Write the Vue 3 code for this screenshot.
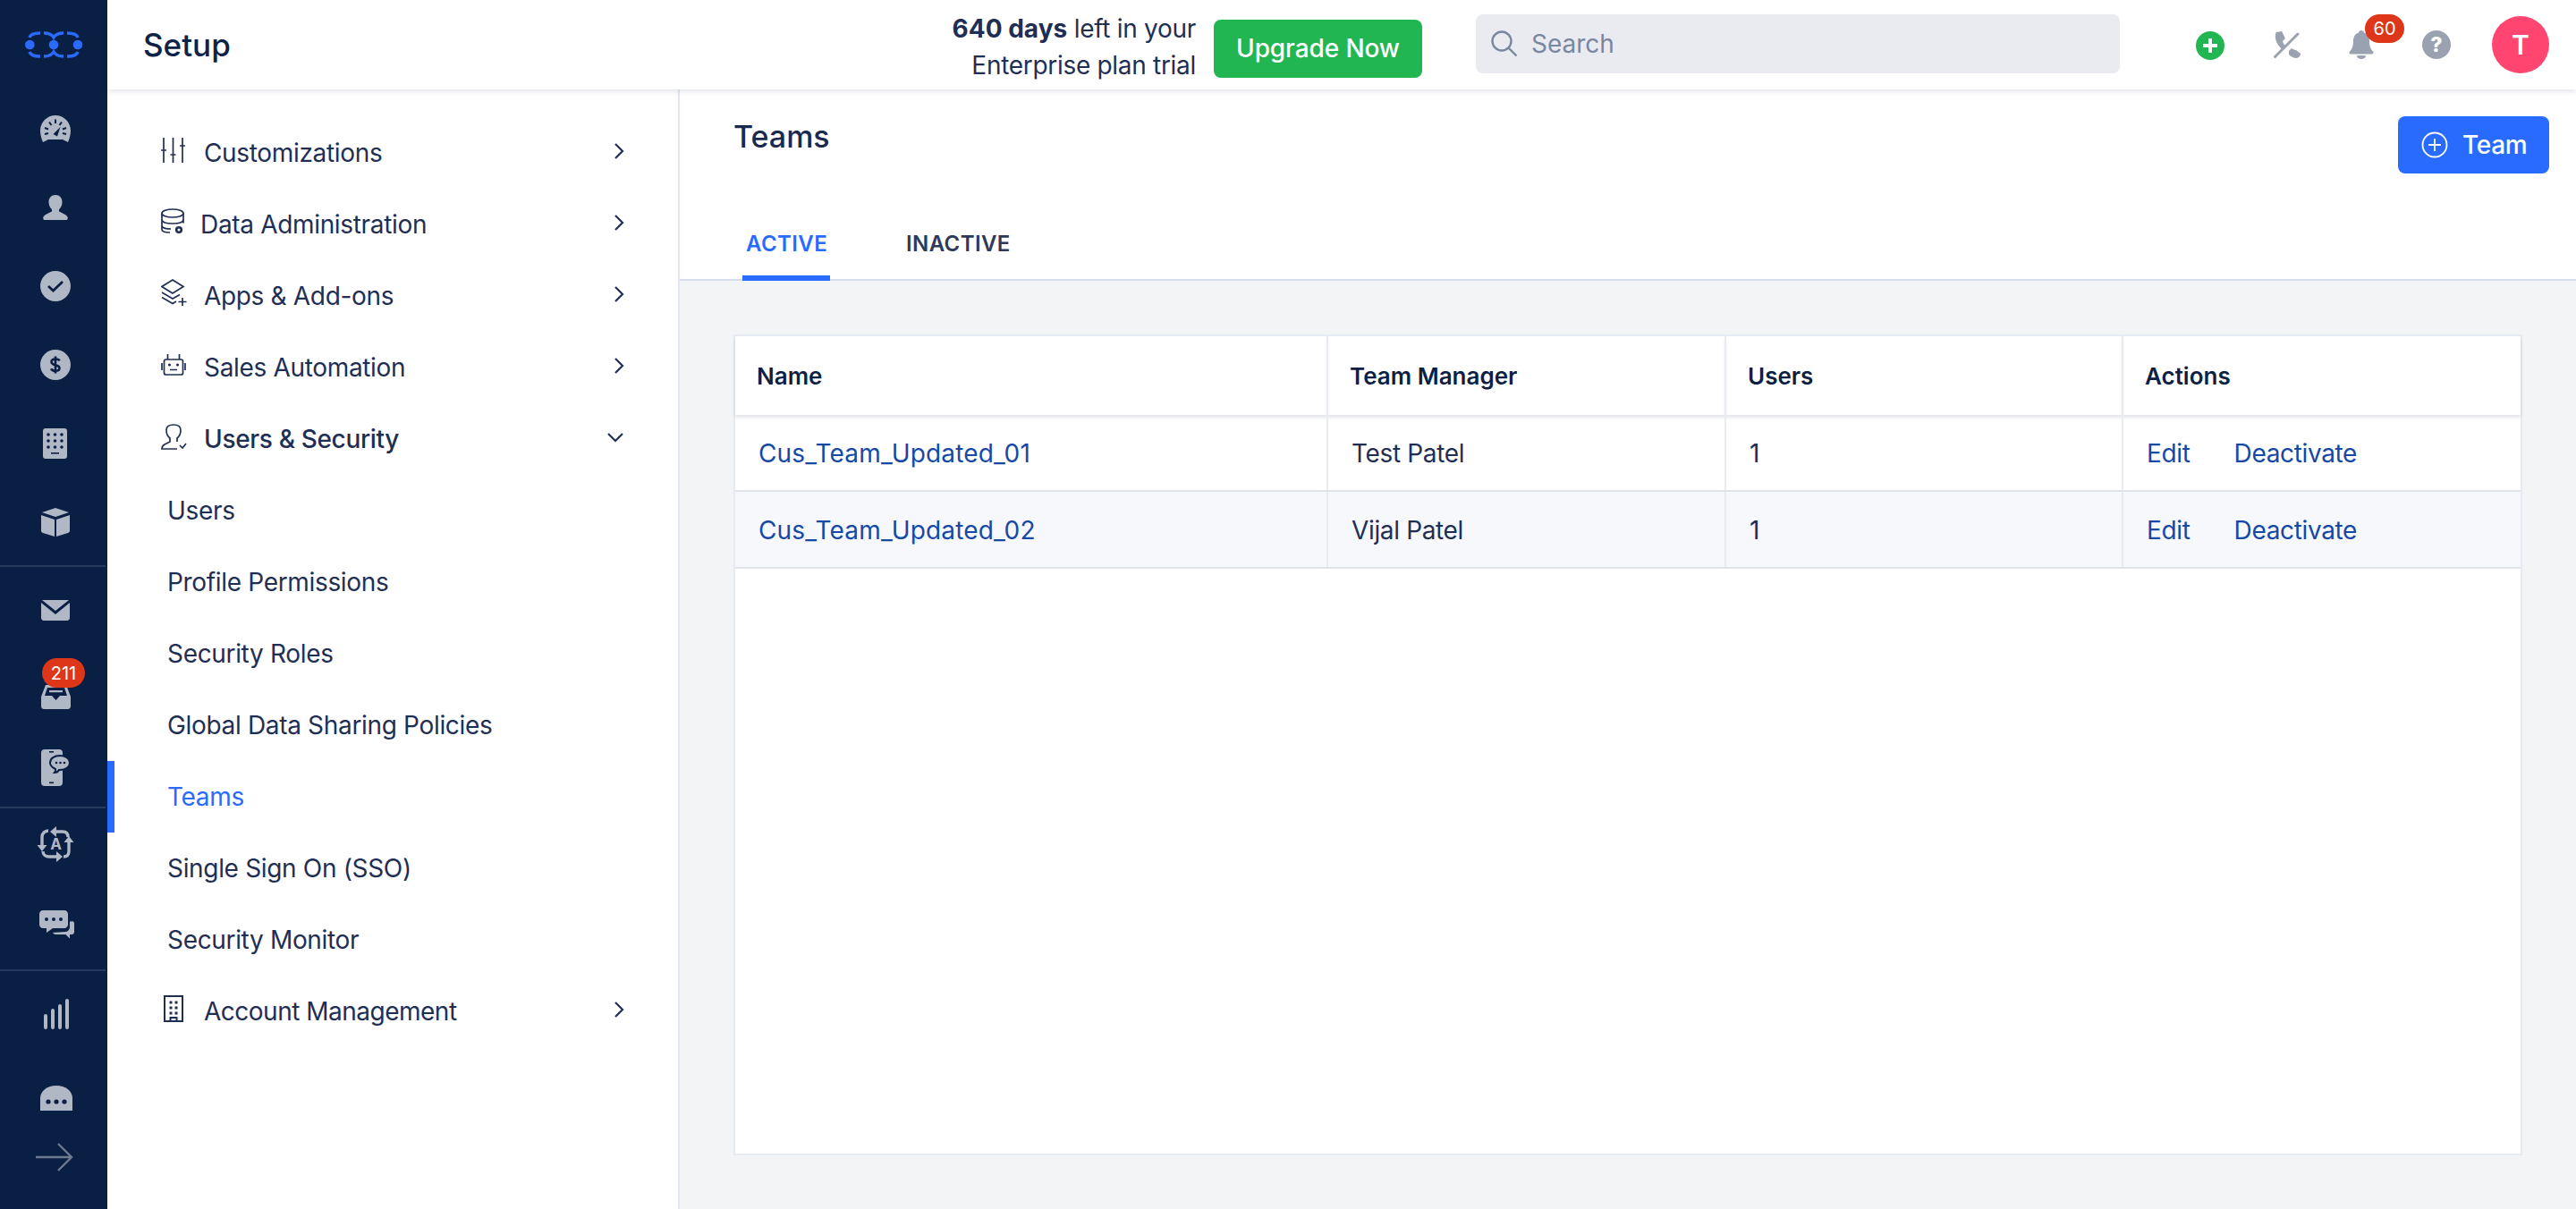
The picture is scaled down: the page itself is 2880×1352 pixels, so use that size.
<script setup>
const menuTop = [
  { label: 'Customizations', icon: 'sliders' },
  { label: 'Data Administration', icon: 'db', tight: true },
  { label: 'Apps & Add-ons', icon: 'layers' },
  { label: 'Sales Automation', icon: 'bot' },
]
const subs = ['Users', 'Profile Permissions', 'Security Roles', 'Global Data Sharing Policies', 'Teams', 'Single Sign On (SSO)', 'Security Monitor']
const rows = [
  { name: 'Cus_Team_Updated_01', manager: 'Test Patel', users: 1 },
  { name: 'Cus_Team_Updated_02', manager: 'Vijal Patel', users: 1 },
]
</script>

<template>
  <div class="app">
    <aside class="rail">
      <div class="logo-slot">
        <svg width="64" height="32" viewBox="0 0 64 32" fill="none" stroke="#2a6bff" stroke-width="3.400">
          <circle cx="5.300" cy="16" r="5.300" fill="#2a6bff" stroke="none"/>
          <circle cx="32" cy="16" r="5.300" fill="#2a6bff" stroke="none"/>
          <circle cx="59" cy="16" r="5.300" fill="#2a6bff" stroke="none"/>
          <path d="M5 8C6 4 10 3 17 3M21 3c6 0 9 1.500 11 5 2-3.500 5-5 11-5M47 3c7 0 11 1 12 5M5 24c1 4 5 5 12 5M21 29c6 0 9-1.500 11-5 2 3.500 5 5 11 5M47 29c7 0 11-1 12-5"/>
        </svg>
      </div>
      <div class="slot">
        <svg width="34" height="30" viewBox="0 0 34 30"><path fill="#b0b7c5" d="M17 0C7.600 0 0 7.600 0 17c0 4.200 1.100 8.500 3 13l6-3h16l6 3c1.900-4.500 3-8.800 3-13C34 7.600 26.400 0 17 0z"/><path d="M14.500 21l8-8-3.500 10.500z" fill="#0a1f44"/><path d="M5 21l4-1M5 14l4 1.500M10 7.500l2.500 3.500M17 4.500v4.500M24 7.500L21.500 11M29 14l-4 1.500M29 21l-4-1" stroke="#0a1f44" stroke-width="2"/></svg>
      </div>
      <div class="slot">
        <svg width="28" height="28" viewBox="0 0 28 28"><path fill="#b0b7c5" d="M14 0c4.600 0 7.500 3.400 7.500 8 0 3.500-1.600 6.600-3.500 8.300v2.200c3 1.500 8.400 3.500 9.600 6.200.5 1.300 0 3.300-1.600 3.300H2c-1.600 0-2.100-2-1.600-3.300C1.600 22 7 20 10 18.500v-2.200C8.100 14.600 6.500 11.500 6.500 8 6.500 3.400 9.400 0 14 0z"/></svg>
      </div>
      <div class="slot">
        <svg width="34" height="34" viewBox="0 0 34 34"><circle cx="17" cy="17" r="17" fill="#b0b7c5"/><path d="M9 17l5.500 5L25 12" fill="none" stroke="#0a1f44" stroke-width="2.800"/></svg>
      </div>
      <div class="slot">
        <svg width="34" height="34" viewBox="0 0 34 34"><circle cx="17" cy="17" r="17" fill="#b0b7c5"/><path d="M21.500 12.500C21 11 19 10.500 17 10.500c-2.500 0-4.500 1-4.500 3.200 0 4.500 9 2.500 9 6.800 0 2.200-2 3.300-4.500 3.300-2.200 0-4.200-.8-4.800-2.500M17 7.500v19" fill="none" stroke="#0a1f44" stroke-width="2.600"/></svg>
      </div>
      <div class="slot">
        <svg width="28" height="34" viewBox="0 0 28 34"><rect width="27" height="34" rx="3" fill="#b0b7c5"/><g fill="#0a1f44"><circle cx="6" cy="7" r="1.800"/><circle cx="13.500" cy="7" r="1.800"/><circle cx="21" cy="7" r="1.800"/><circle cx="6" cy="14" r="1.800"/><circle cx="13.500" cy="14" r="1.800"/><circle cx="21" cy="14" r="1.800"/><circle cx="6" cy="21" r="1.800"/><circle cx="13.500" cy="21" r="1.800"/><circle cx="21" cy="21" r="1.800"/><rect x="9" y="27" width="9" height="1.600"/></g></svg>
      </div>
      <div class="slot">
        <svg width="32" height="32" viewBox="0 0 32 32"><path fill="#b0b7c5" d="M16 0l15 5-15 5L1 5zM0 8l15 5v19L2 28c-1.200-.4-2-1.200-2-2.500zM32 8l-15 5v19l13-4c1.200-.4 2-1.200 2-2.500z"/></svg>
      </div>
      <div class="rule"></div>
      <div class="slot">
        <svg width="32" height="24" viewBox="0 0 32 24"><path fill="#b0b7c5" d="M1 1h30L16 13zM0 4l16 13L32 4v17c0 1.600-1.400 3-3 3H3c-1.600 0-3-1.400-3-3z"/></svg>
      </div>
      <div class="slot slot-inbox">
        <span class="rail-badge">211</span>
        <svg width="33" height="27" viewBox="0 0 33 27"><path fill="#b0b7c5" d="M5 0h23l5 13v11c0 1.600-1.400 3-3 3H3c-1.600 0-3-1.400-3-3V13z"/><path fill="#0a1f44" d="M7 3h19l3 9h-8l-4.500 5-4.500-5H4z"/><path fill="#b0b7c5" d="M9 6h15v2.200H9z"/></svg>
      </div>
      <div class="slot">
        <svg width="32" height="41" viewBox="0 0 32 41"><rect x="0" y="0" width="24" height="41" rx="4" fill="#b0b7c5"/><path fill="#b0b7c5" stroke="#0a1f44" stroke-width="2" d="M21 7c6 0 11 3 11 8s-5 8-11 8h-1c-1 2-3 3-5 3 1-1 1.500-2.500 1-4-3-1.500-6-3.500-6-7 0-5 5-8 11-8z"/><circle cx="17" cy="15" r="1.300" fill="#0a1f44"/><circle cx="21.500" cy="15" r="1.300" fill="#0a1f44"/><circle cx="26" cy="15" r="1.300" fill="#0a1f44"/><rect x="9" y="2" width="5" height="1.600" fill="#0a1f44"/><rect x="9" y="36.500" width="5" height="1.600" fill="#0a1f44"/></svg>
      </div>
      <div class="rule rule-flush"></div>
      <div class="slot slot-translate">
        <svg width="42" height="40" viewBox="0 0 42 40" fill="none" stroke="#b0b7c5" stroke-width="3.400"><path d="M19 6h9c4 0 6 2 6 6M35 17v11c0 4-2 6-6 6M22 34h-9c-4 0-7-2-7-6M5 22V12c0-4 3-7 7-7"/><path fill="#b0b7c5" stroke="none" d="M21 0v12l-7-6zM21 28v12l7-6zM-0.500 21h11l-5.500 7zM29.500 18h11L35 11z"/><text x="20.500" y="26" font-family="Inter" font-size="17" font-weight="700" fill="#b0b7c5" stroke="none" text-anchor="middle">A</text></svg>
      </div>
      <div class="slot slot-chat">
        <svg width="40" height="34" viewBox="0 0 40 34"><path fill="#b0b7c5" d="M4 0h24c2.200 0 4 1.800 4 4v12c0 2.200-1.800 4-4 4H15l-7 5v-5H4c-2.200 0-4-1.800-4-4V4c0-2.200 1.800-4 4-4z"/><circle cx="8" cy="10" r="2" fill="#0a1f44"/><circle cx="16" cy="10" r="2" fill="#0a1f44"/><circle cx="24" cy="10" r="2" fill="#0a1f44"/><path fill="#b0b7c5" stroke="#0a1f44" stroke-width="2" d="M36 11c2.200 0 4 1.800 4 4v9c0 2.200-1.800 4-4 4h-1v6l-6-6H19c-3 0-5-2-5-4l15-1c2 0 4-2 4-4v-7z"/></svg>
      </div>
      <div class="rule rule-third"></div>
      <div class="slot slot-bars">
        <svg width="28" height="34" viewBox="0 0 28 34"><g fill="#b0b7c5"><rect x="0" y="17" width="4" height="17" rx="2"/><rect x="8" y="11" width="4" height="23" rx="2"/><rect x="16" y="6" width="4" height="28" rx="2"/><rect x="24" y="0" width="4" height="34" rx="2"/></g></svg>
      </div>
      <div class="slot slot-clip">
        <svg width="36" height="28" viewBox="0 0 36 28"><path fill="#b0b7c5" d="M18 0c10 0 18 6 18 14v14H0V14C0 6 8 0 18 0z"/><circle cx="9" cy="18" r="2.600" fill="#0a1f44"/><circle cx="18" cy="18" r="2.600" fill="#0a1f44"/><circle cx="27" cy="18" r="2.600" fill="#0a1f44"/></svg>
      </div>
      <div class="arrow-slot">
        <svg width="42" height="32" viewBox="0 0 42 32" fill="none" stroke="#6d7a90" stroke-width="2.400"><path d="M0 16h40M25 1l15 15-15 15"/></svg>
      </div>
    </aside>

    <div class="main">
      <header class="topbar">
        <div class="title">Setup</div>
        <div class="trial"><b>640 days</b> left in your<br>Enterprise plan trial</div>
        <button class="upgrade">Upgrade Now</button>
        <div class="search">
          <svg width="30" height="30" viewBox="0 0 30 30" fill="none" stroke="#7a879e" stroke-width="2.400"><circle cx="12" cy="12" r="10.500"/><path d="M19.500 19.500L28.500 28.500"/></svg>
          <span>Search</span>
        </div>
        <div class="tools">
          <svg class="t-plus" width="32" height="32" viewBox="0 0 32 32"><circle cx="16" cy="16" r="16" fill="#22b653"/><path d="M16 8v16M8 16h16" stroke="#fff" stroke-width="4"/></svg>
          <svg class="t-phone" width="30" height="30" viewBox="0 0 30 30"><path fill="#9aa1b0" d="M3 1l6-1 4 8-3 3c.6 2.500 1.500 4 3 5l-4 4C4 15 1 9 2 3zM17 22l3-3c2 1 3.500 2 5 2l5 4c0 3-2 4-4 5-4 0-7-2-9-4z"/><path d="M1.500 28.500L27 3" stroke="#9aa1b0" stroke-width="3" stroke-linecap="round"/></svg>
          <span class="t-bell">
            <svg width="28" height="32" viewBox="0 0 28 32"><path fill="#9aa1b0" d="M14 0c2 0 3 1.500 3 2.500C21.500 4 23 8 23 12c0 6 1.500 9 4 11.500.9 1 .5 3-1.200 3H2.200C.5 26.500.1 24.500 1 23.500 3.500 21 5 18 5 12c0-4 1.500-8 6-9.500C11 1.500 12 0 14 0zM9 28h10c0 2.500-2.200 4-5 4s-5-1.500-5-4z"/></svg>
            <span class="bell-badge">60</span>
          </span>
          <svg class="t-help" width="32" height="32" viewBox="0 0 32 32"><circle cx="16" cy="16" r="16" fill="#9aa1b0"/><text x="16" y="24" text-anchor="middle" font-family="Inter" font-weight="800" font-size="23" fill="#fff">?</text></svg>
          <div class="avatar">T</div>
        </div>
      </header>

      <div class="body">
        <nav class="menu">
          <div v-for="item in menuTop" :key="item.label" class="m-row">
            <svg class="m-icon" width="30" height="34" viewBox="0 0 30 34" fill="none" stroke="#1f2f54" stroke-width="1.700">
              <template v-if="item.icon === 'sliders'"><path d="M3 3v28M13.500 3v28M24 3v28M0 17h6M10.500 22h6M21 12h6"/></template>
              <template v-else-if="item.icon === 'db'"><ellipse cx="13" cy="7.500" rx="12" ry="4.500"/><path d="M1 7.500v18c0 2 3 3.500 9 3.500M25 7.500v11M1 14.500c0 3 5 4.500 12 4.500s12-1.500 12-4.500M1 21c0 2 3 4 10 4"/><circle cx="20" cy="26" r="2.800" stroke-width="2.600"/></template>
              <template v-else-if="item.icon === 'layers'"><path d="M13 2l12 7.500L13 17 1 9.500zM1 16l12 7 8-4.500M1 21.500l12 7 4-2.500M24 22v9M19.500 26.500h9"/></template>
              <template v-else><rect x="3.500" y="11" width="21" height="17" rx="2"/><path d="M7.500 5v6M20.500 5v6M1 15v8M27 15v8M10 22.500h8"/><circle cx="9.500" cy="17" r="1.600" fill="#1f2f54" stroke="none"/><circle cx="18.500" cy="17" r="1.600" fill="#1f2f54" stroke="none"/></template>
            </svg>
            <span class="m-label" :class="{ 'm-tight': item.tight }">{{ item.label }}</span>
            <svg class="chev" width="12" height="20" viewBox="0 0 12 20" fill="none" stroke="#1f2f54" stroke-width="2.200"><path d="M2 2l8 8-8 8"/></svg>
          </div>
          <div class="m-row m-open">
            <svg class="m-icon" width="30" height="34" viewBox="0 0 30 34" fill="none" stroke="#1f2f54" stroke-width="1.700"><path d="M18 31H1c0-3 1-4 3-5l6-3v-4C7.500 17 6 13.500 6 10c0-4 3-6 8-6s8 2 8 6c0 3.500-1.500 7-4 9v4M21 27l3 3 4-5"/></svg>
            <span class="m-label">Users &amp; Security</span>
            <svg class="chev-down" width="20" height="12" viewBox="0 0 20 12" fill="none" stroke="#1f2f54" stroke-width="2.200"><path d="M2 2l8 8 8-8"/></svg>
          </div>
          <div v-for="s in subs" :key="s" class="m-sub" :class="{ on: s === 'Teams' }">{{ s }}</div>
          <div class="m-row m-last">
            <svg class="m-icon" width="30" height="34" viewBox="0 0 30 34" fill="none" stroke="#1f2f54" stroke-width="2"><path d="M4 3h20v28H4zM10.500 31v-4h7v4"/><path d="M9.500 10h3M15.500 10h3M9.500 16h3M15.500 16h3M9.500 22h3M15.500 22h3" stroke-width="3"/></svg>
            <span class="m-label">Account Management</span>
            <svg class="chev" width="12" height="20" viewBox="0 0 12 20" fill="none" stroke="#1f2f54" stroke-width="2.200"><path d="M2 2l8 8-8 8"/></svg>
          </div>
        </nav>

        <main class="content">
          <section class="page-head">
            <div class="head-row">
              <h1>Teams</h1>
              <button class="add">
                <svg width="30" height="30" viewBox="0 0 30 30" fill="none" stroke="#fff" stroke-width="1.800"><circle cx="15" cy="15" r="13.500"/><path d="M15 8v14M8 15h14"/></svg>
                Team
              </button>
            </div>
            <div class="tabs">
              <div class="tab active">ACTIVE</div>
              <div class="tab">INACTIVE</div>
            </div>
          </section>
          <section class="panel">
            <table>
              <thead>
                <tr><th class="c1">Name</th><th class="c2">Team Manager</th><th class="c3">Users</th><th>Actions</th></tr>
              </thead>
              <tbody>
                <tr v-for="r in rows" :key="r.name">
                  <td><a class="name">{{ r.name }}</a></td>
                  <td>{{ r.manager }}</td>
                  <td>{{ r.users }}</td>
                  <td><a class="edit">Edit</a><a>Deactivate</a></td>
                </tr>
              </tbody>
            </table>
          </section>
        </main>
      </div>
    </div>
  </div>
</template>

<style>
html, body { margin: 0; background: #f3f4f6; }
</style>

<style scoped>
.app { display: flex; width: 2880px; height: 1352px; overflow: hidden; font-family: Inter, "Liberation Sans", sans-serif; color: #1f2f54; }
.rail { width: 120px; flex: none; background: #0a1f44; display: flex; flex-direction: column; align-items: center; position: relative; }
.logo-slot { height: 100px; display: flex; align-items: center; justify-content: center; flex: none; }
.slot { height: 88px; width: 100%; flex: none; display: flex; align-items: center; justify-content: center; position: relative; box-sizing: border-box; padding-left: 4px; }
.slot svg { display: block; overflow: visible; }
.slot-inbox svg { transform: translateY(9px); }
.slot-translate { height: 80px; padding-left: 6px; }
.slot-chat { height: 98px; padding-top: 4px; padding-left: 7px; }
.slot-bars { padding-left: 6px; }
.slot-clip { padding-top: 12px; padding-left: 6px; }
.rule { width: 118px; height: 2px; background: #263a5c; align-self: flex-start; margin: 4px 0; flex: none; }
.rule-flush { margin: 0; }
.rule-third { margin: 2px 0 4px; }
.rail-badge { position: absolute; left: 47px; top: 10px; width: 48px; height: 33px; border-radius: 17px; background: #de3618; color: #fff; font-size: 20px; display: flex; align-items: center; justify-content: center; z-index: 1; }
.arrow-slot { margin-top: 12px; flex: none; padding-left: 2px; }
.main { flex: 1; min-width: 0; display: flex; flex-direction: column; }
.topbar { height: 100px; flex: none; background: #fff; display: flex; align-items: center; box-shadow: 0 2px 6px rgba(30, 45, 80, .14); position: relative; z-index: 2; box-sizing: border-box; padding-left: 40px; }
.title { font-size: 35px; font-weight: 500; color: #0f2348; width: 857px; flex: none; }
.trial { width: 320px; flex: none; text-align: right; font-size: 28px; letter-spacing: -.3px; line-height: 41px; color: #1f2f54; margin-top: 6px; }
.trial b { font-weight: 700; letter-spacing: 0; }
.upgrade { margin-left: 20px; width: 233px; height: 65px; margin-top: 8px; border: 0; border-radius: 8px; background: #22b653; color: #fff; font: 500 28px Inter, sans-serif; letter-spacing: -.1px; padding: 0; }
.search { margin-left: 60px; margin-top: -2px; width: 720px; height: 66px; background: #e9ebf0; border-radius: 8px; display: flex; align-items: center; gap: 15px; padding-left: 17px; box-sizing: border-box; color: #7a879e; font-size: 28px; }
.tools { flex: 1; position: relative; height: 100px; }
.tools > * { position: absolute; }
.t-plus { left: 85px; top: 35px; }
.t-phone { left: 172px; top: 35px; }
.t-bell { left: 256px; top: 34px; }
.t-bell svg { display: block; }
.bell-badge { position: absolute; left: 18px; top: -18px; width: 44px; height: 32px; border-radius: 16px; background: #de3618; color: #fff; font-size: 20px; display: flex; align-items: center; justify-content: center; }
.t-help { left: 338px; top: 34px; }
.avatar { left: 416px; top: 18px; width: 64px; height: 64px; border-radius: 50%; background: #ff4570; color: #fff; font-size: 30px; font-weight: 600; display: flex; align-items: center; justify-content: center; }
.body { flex: 1; display: flex; min-height: 0; }
.menu { width: 640px; flex: none; box-sizing: border-box; background: #fff; border-right: 2px solid #e3e6ee; padding-top: 31px; }
.m-row { height: 80px; display: flex; align-items: center; padding-left: 60px; position: relative; font-size: 28px; letter-spacing: -.33px; color: #1f2f54; }
.m-last { letter-spacing: -.5px; }
.m-icon { flex: none; width: 30px; height: 34px; display: block; margin-top: -6px; }
.m-label { margin-left: 18px; }
.m-tight { margin-left: 14px; }
.m-open .m-label { font-weight: 500; }
.chev { position: absolute; left: 566px; top: 28px; }
.chev-down { position: absolute; left: 558px; top: 32px; }
.m-sub { height: 80px; line-height: 80px; padding-left: 67px; font-size: 28px; letter-spacing: -.33px; color: #1f2f54; position: relative; }
.m-sub.on { color: #2a6bff; }
.m-sub.on::before { content: ""; position: absolute; left: 0; top: 0; width: 8px; height: 80px; background: #2a6bff; }
.content { flex: 1; min-width: 0; display: flex; flex-direction: column; background: #f3f4f6; }
.page-head { background: #fff; height: 214px; box-sizing: border-box; border-bottom: 2px solid #d6dcea; padding: 0 30px 0 60px; display: flex; flex-direction: column; justify-content: space-between; }
.head-row { display: flex; justify-content: space-between; align-items: flex-start; }
h1 { margin: 31px 0 0; font-size: 34px; font-weight: 500; color: #1a2a4f; line-height: 44px; }
.add { margin-top: 30px; width: 169px; height: 64px; border: 0; border-radius: 8px; background: #2a6bff; color: #fff; font: 500 28px Inter, sans-serif; letter-spacing: -.3px; display: flex; align-items: center; gap: 16px; padding: 0 0 0 26px; }
.tabs { display: flex; margin-bottom: -2px; padding-left: 10px; }
.tab { font-size: 24px; font-weight: 600; letter-spacing: .4px; color: #2e3a59; padding: 0 5px 0 4px; height: 62px; box-sizing: border-box; line-height: 42px; margin-right: 81px; }
.tab.active { color: #2a6bff; border-bottom: 6px solid #2a6bff; width: 98px; }
.panel { margin: 60px 60px 0; height: 918px; box-sizing: border-box; background: #fff; border: 2px solid #e6eaf1; }
table { width: 100%; border-collapse: collapse; table-layout: fixed; font-size: 28px; }
th { height: 88px; box-sizing: border-box; text-align: left; font-size: 26px; font-weight: 600; color: #0d1f44; padding: 0 0 0 24px; border-right: 2px solid #e9ebf2; box-shadow: 0 3px 4px rgba(30, 45, 80, .12); }
.c1 { width: 662px; }
.c2 { width: 445px; }
.c3 { width: 444px; }
th:last-child, td:last-child { border-right: 0; }
td { height: 86px; box-sizing: border-box; padding: 2px 0 0 26px; letter-spacing: -.35px; border-right: 2px solid #e9ebf2; border-bottom: 2px solid #e0e3ec; color: #1f2f54; }
tbody tr:first-child td { height: 85px; }
tbody tr:nth-child(2) td { background: #f7f8fc; }
a { color: #1649a5; }
.name { letter-spacing: .15px; }
.edit { margin-right: 49px; }
</style>
